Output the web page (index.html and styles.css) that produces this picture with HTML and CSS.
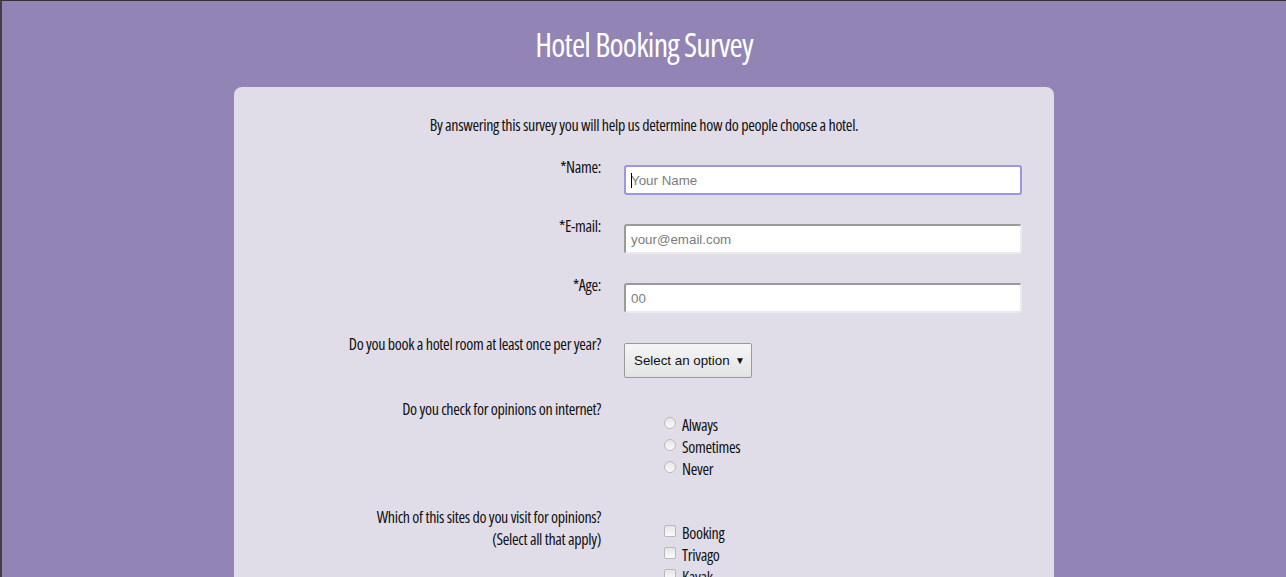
FILE: index.html
```html
<!DOCTYPE html>
<html lang="en">
<head>
<meta charset="utf-8">
<title>Hotel Booking Survey</title>
<link rel="stylesheet" href="styles.css">
</head>
<body>
<h1 class="title">Hotel Booking Survey</h1>
<main class="card">
  <p class="intro">By answering this survey you will help us determine how do people choose a hotel.</p>
  <form class="survey">
    <div class="row">
      <label class="label" for="name">*Name:</label>
      <div class="field"><input class="text focused" id="name" type="text" placeholder="Your Name"><span class="caret"></span></div>
    </div>
    <div class="row">
      <label class="label" for="email">*E-mail:</label>
      <div class="field"><input class="text" id="email" type="email" placeholder="your@email.com"></div>
    </div>
    <div class="row">
      <label class="label" for="age">*Age:</label>
      <div class="field"><input class="text" id="age" type="text" placeholder="00"></div>
    </div>
    <div class="row">
      <label class="label" for="book">Do you book a hotel room at least once per year?</label>
      <div class="field"><div class="select" id="book"><span>Select an option</span><span class="arrow">▼</span></div></div>
    </div>
    <div class="row">
      <div class="label">Do you check for opinions on internet?</div>
      <div class="field">
        <ul class="choices radios">
          <li><span class="radio"></span>Always</li>
          <li><span class="radio"></span>Sometimes</li>
          <li><span class="radio"></span>Never</li>
        </ul>
      </div>
    </div>
    <div class="row">
      <div class="label">Which of this sites do you visit for opinions?<br>(Select all that apply)</div>
      <div class="field">
        <ul class="choices">
          <li><span class="check"></span>Booking</li>
          <li><span class="check"></span>Trivago</li>
          <li><span class="check"></span>Kayak</li>
        </ul>
      </div>
    </div>
  </form>
</main>
</body>
</html>
```
FILE: styles.css
```css
html, body {
  margin: 0;
  padding: 0;
}
body {
  background: #9285b6;
  border-top: 1px solid #333036;
  border-left: 2px solid #4a3a44;
  height: 577px;
  box-sizing: border-box;
  font-family: "Open Sans", "DejaVu Sans", sans-serif;
  font-stretch: 75%;
  font-weight: 500;
  letter-spacing: -0.02em;
  color: #111;
  overflow: hidden;
}
.title {
  margin: 0;
  padding: 24px 0 0;
  height: 86px;
  box-sizing: border-box;
  text-align: center;
  color: #fff;
  font-weight: 400;
  font-size: 32px;
  line-height: 40px;
  letter-spacing: -0.8px;
}
.card {
  width: 820px;
  margin: 0 auto;
  background: #e0dde8;
  border-radius: 8px 8px 0 0;
  padding: 27px 0 0;
  height: 490px;
  box-sizing: border-box;
}
.intro {
  margin: 0 0 20px;
  text-align: center;
  font-size: 16px;
  line-height: 22px;
}
.survey {
  display: flex;
  flex-direction: column;
  gap: 20px;
}
.row {
  display: grid;
  grid-template-columns: 367px 398px;
  column-gap: 23px;
}
.label {
  text-align: right;
  font-size: 16px;
  line-height: 22px;
}
.field {
  position: relative;
  padding-top: 9px;
}
.text {
  display: block;
  box-sizing: border-box;
  width: 398px;
  height: 30px;
  margin: 0;
  padding: 0 5px;
  border: 2px solid #9a9a9a;
  border-right-color: #ebebeb;
  border-bottom-color: #ebebeb;
  border-radius: 3px;
  background: #fff;
  font-family: "Liberation Sans", Arial, sans-serif;
  font-size: 13.33px;
  font-weight: 400;
  letter-spacing: 0;
  color: #333;
  outline: none;
}
.text::placeholder {
  color: #7c7c7c;
}
.text.focused {
  border: 2px solid #9c95e2;
}
.caret {
  position: absolute;
  left: 7px;
  top: 17px;
  width: 1px;
  height: 15px;
  background: #000;
}
.select {
  display: flex;
  align-items: center;
  justify-content: space-between;
  box-sizing: border-box;
  margin-top: 1px;
  height: 35px;
  width: 128px;
  padding: 0 6px 0 9px;
  border: 1px solid #9a9a9a;
  border-radius: 2px;
  background: linear-gradient(#f5f5f5, #e3e3e3);
  font-family: "Liberation Sans", Arial, sans-serif;
  font-weight: 400;
  letter-spacing: 0;
  white-space: nowrap;
  font-size: 13.33px;
  color: #111;
}
.arrow {
  font-size: 10px;
}
.choices {
  list-style: none;
  margin: 0;
  padding: 7px 0 0 40px;
}
.radios {
  margin-bottom: 6px;
}
.choices li {
  display: flex;
  align-items: center;
  font-size: 16px;
  line-height: 22px;
}
.radio, .check {
  display: inline-block;
  box-sizing: border-box;
  width: 12px;
  height: 12px;
  margin: 0 6px 4px 0;
  border: 1px solid #b9b9b9;
  background: linear-gradient(#e6e6e6, #fafafa);
}
.radio {
  border-radius: 50%;
}
.check {
  border-radius: 2px;
}
```
